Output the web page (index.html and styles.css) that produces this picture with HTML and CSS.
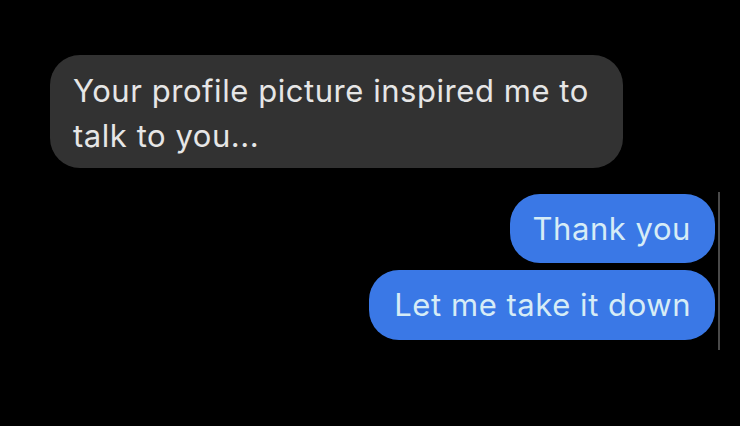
FILE: index.html
```html
<!DOCTYPE html>
<html>
<head>
<meta charset="utf-8">
<link rel="stylesheet" href="styles.css">
</head>
<body>
<div class="chat">
  <div class="received">
    <div class="bubble grey">Your profile picture inspired me to talk to you...</div>
  </div>
  <div class="sent">
    <div class="bubble blue first">Thank you</div>
    <div class="bubble blue last">Let me take it down</div>
  </div>
</div>
</body>
</html>
```
FILE: styles.css
```css
html, body {
  margin: 0;
  padding: 0;
  background: #000;
  width: 740px;
  height: 426px;
  overflow: hidden;
}
.chat {
  display: flex;
  flex-direction: column;
  padding-top: 55px;
  font-family: Inter, "Liberation Sans", sans-serif;
  font-size: 31px;
  line-height: 45px;
  letter-spacing: 0.55px;
}
.received {
  display: flex;
  padding-left: 50px;
}
.bubble {
  border-radius: 30px;
  box-sizing: border-box;
}
.grey {
  background: #323232;
  color: #e6e6e6;
  width: 573px;
  height: 113px;
  padding: 13px 14px 0 23px;
}
.sent {
  display: flex;
  flex-direction: column;
  align-items: flex-end;
  gap: 7px;
  margin-top: 24px;
  margin-left: auto;
  margin-right: 20px;
  padding: 2px 3px 10px 0;
  border-right: 2px solid #4a4a4a;
}
.blue {
  background: #3a78e6;
  color: #d6ecf6;
  height: 69px;
  padding: 12px 24px 0 23px;
  white-space: nowrap;
}
.last {
  height: 70px;
  padding-left: 25px;
}
```
